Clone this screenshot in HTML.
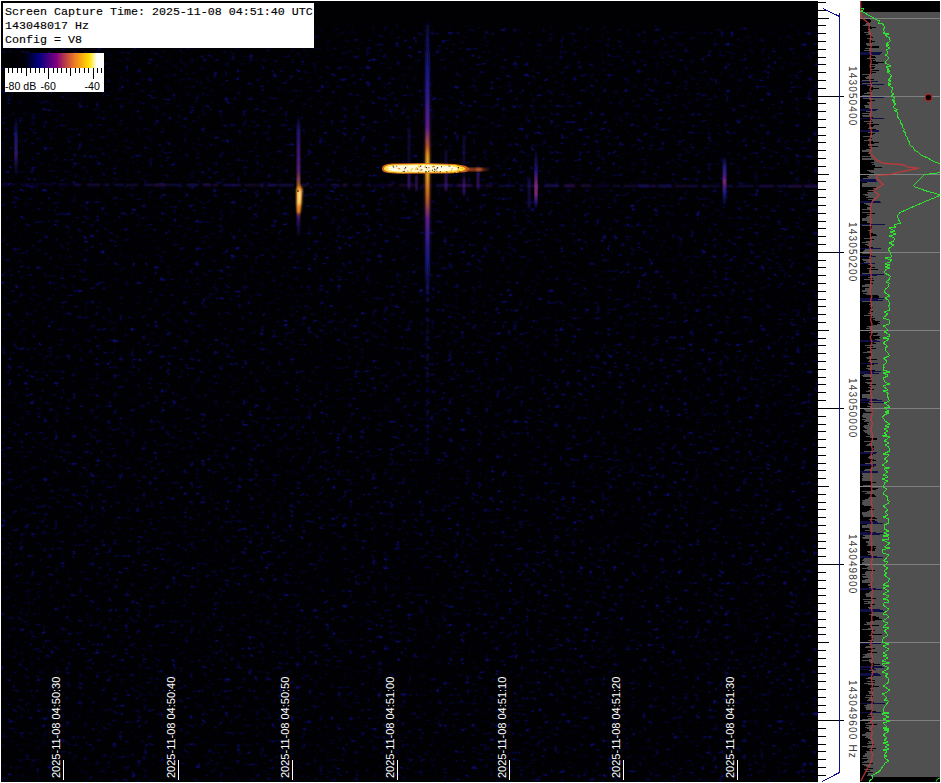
<!DOCTYPE html>
<html><head><meta charset="utf-8"><style>
html,body{margin:0;padding:0;}
body{width:941px;height:783px;background:#fff;position:relative;overflow:hidden;}
.a{position:absolute;}
#wf{left:1px;top:1px;width:817px;height:781px;background:#010104;overflow:hidden;}
#tb{left:2px;top:2px;width:311px;height:45px;background:#fff;font-family:"Liberation Mono",monospace;font-size:11.67px;color:#000;-webkit-text-stroke:0.15px #000;}
#tb div{position:absolute;left:2px;white-space:pre;line-height:12px;}
.ts{position:absolute;font-family:"Liberation Sans",sans-serif;font-size:11px;color:#fff;white-space:pre;transform-origin:0 0;transform:rotate(-90deg);line-height:11px;}
.hz{position:absolute;font-family:"Liberation Sans",sans-serif;font-size:10px;letter-spacing:1.16px;color:#3a3a3a;white-space:pre;transform-origin:0 0;transform:rotate(90deg);line-height:11px;}
#sp{left:860px;top:1px;width:80px;height:781px;background:#505050;overflow:hidden;}
</style></head><body>
<div id="wf" class="a"><svg class="a" style="left:0;top:0" width="817" height="781">
<defs>
<filter id="nz" x="0" y="0" width="100%" height="100%" color-interpolation-filters="sRGB">
<feTurbulence type="fractalNoise" baseFrequency="0.17 0.26" numOctaves="2" seed="3" result="t"/>
<feColorMatrix in="t" type="matrix" values="0 0 0 0 0  0 0 0 0 0  0 0 0 0 0  9 0 0 0 -6.4" result="m"/>
<feFlood flood-color="#0b0b60" result="f"/>
<feComposite in="f" in2="m" operator="in" result="c"/>
<feColorMatrix in="t" type="matrix" values="0 0 0 0 0  0 0 0 0 0  0 0 0 0 0  5 0 0 0 -2.9" result="m2"/>
<feFlood flood-color="#05053a" result="f2"/>
<feComposite in="f2" in2="m2" operator="in" result="c2"/>
<feMerge result="mm"><feMergeNode in="c2"/><feMergeNode in="c"/></feMerge>
<feTurbulence type="fractalNoise" baseFrequency="0.02 0.035" numOctaves="2" seed="11" result="lf"/>
<feColorMatrix in="lf" type="matrix" values="0 0 0 0 0  0 0 0 0 0  0 0 0 0 0  1.6 0 0 0 0.1" result="lfa"/>
<feComposite in="mm" in2="lfa" operator="in" result="mod"/>
<feGaussianBlur in="mod" stdDeviation="0.75"/>
</filter>
<filter id="bl1"><feGaussianBlur stdDeviation="0.8"/></filter>
<filter id="bl2"><feGaussianBlur stdDeviation="1.2"/></filter>
<linearGradient id="vg428" x1="0" y1="0" x2="0" y2="1">
<stop offset="0" stop-color="#2a1070" stop-opacity="0"/>
<stop offset="0.15" stop-color="#3a18a0"/>
<stop offset="0.35" stop-color="#7020a0"/>
<stop offset="0.48" stop-color="#f09020"/>
<stop offset="0.55" stop-color="#f0a030"/>
<stop offset="0.65" stop-color="#8020a0"/>
<stop offset="0.85" stop-color="#3a18a0"/>
<stop offset="1" stop-color="#2a1070" stop-opacity="0"/>
</linearGradient>
<linearGradient id="vg298" x1="0" y1="0" x2="0" y2="1">
<stop offset="0" stop-color="#2a1070" stop-opacity="0"/>
<stop offset="0.2" stop-color="#3018a0"/>
<stop offset="0.5" stop-color="#7a2aa0"/>
<stop offset="0.6" stop-color="#d06040"/>
<stop offset="0.8" stop-color="#3018a0"/>
<stop offset="1" stop-color="#2a1070" stop-opacity="0"/>
</linearGradient>
</defs>
<rect width="817" height="781" filter="url(#nz)"/>
<defs><linearGradient id="topfade" x1="0" y1="0" x2="0" y2="1"><stop offset="0" stop-color="#010104"/><stop offset="0.75" stop-color="#010104"/><stop offset="1" stop-color="#010104" stop-opacity="0"/></linearGradient></defs>
<rect x="0" y="0" width="817" height="30" fill="url(#topfade)"/>
<g transform="translate(-1,-1)"><g filter="url(#bl1)"><rect x="0" y="183.60" width="9" height="1.8" fill="#3018a0" opacity="0.48"/><rect x="11" y="183.62" width="5" height="1.8" fill="#3018a0" opacity="0.34"/><rect x="21" y="183.65" width="18" height="1.8" fill="#3018a0" opacity="0.40"/><rect x="44" y="183.70" width="10" height="1.8" fill="#3018a0" opacity="0.33"/><rect x="58" y="183.73" width="12" height="1.8" fill="#3018a0" opacity="0.33"/><rect x="74" y="183.76" width="7" height="1.8" fill="#3018a0" opacity="0.58"/><rect x="87" y="183.79" width="13" height="1.8" fill="#4a1aa0" opacity="0.48"/><rect x="105" y="183.83" width="4" height="1.8" fill="#2a1a98" opacity="0.69"/><rect x="114" y="183.85" width="10" height="1.8" fill="#2a1a98" opacity="0.54"/><rect x="126" y="183.88" width="12" height="1.8" fill="#4a1aa0" opacity="0.38"/><rect x="144" y="183.92" width="9" height="1.8" fill="#3018a0" opacity="0.55"/><rect x="154" y="183.94" width="13" height="1.8" fill="#5a20a0" opacity="0.58"/><rect x="168" y="183.97" width="14" height="1.8" fill="#2a1a98" opacity="0.49"/><rect x="187" y="184.01" width="11" height="1.8" fill="#2a1a98" opacity="0.72"/><rect x="203" y="184.05" width="8" height="1.8" fill="#4a1aa0" opacity="0.66"/><rect x="213" y="184.07" width="5" height="1.8" fill="#5a20a0" opacity="0.44"/><rect x="223" y="184.09" width="18" height="1.8" fill="#2a1a98" opacity="0.63"/><rect x="244" y="184.14" width="13" height="1.8" fill="#5a20a0" opacity="0.35"/><rect x="258" y="184.17" width="6" height="1.8" fill="#5a20a0" opacity="0.37"/><rect x="267" y="184.19" width="10" height="1.8" fill="#3018a0" opacity="0.73"/><rect x="278" y="184.21" width="16" height="1.8" fill="#2a1a98" opacity="0.56"/><rect x="299" y="184.26" width="9" height="1.8" fill="#5a20a0" opacity="0.46"/><rect x="314" y="184.29" width="13" height="1.8" fill="#3018a0" opacity="0.33"/><rect x="331" y="184.33" width="8" height="1.8" fill="#3018a0" opacity="0.61"/><rect x="343" y="184.35" width="4" height="1.8" fill="#5a20a0" opacity="0.62"/><rect x="353" y="184.38" width="8" height="1.8" fill="#2a1a98" opacity="0.47"/><rect x="367" y="184.41" width="4" height="1.8" fill="#3018a0" opacity="0.46"/><rect x="375" y="184.43" width="11" height="1.8" fill="#2a1a98" opacity="0.40"/><rect x="387" y="184.45" width="6" height="1.8" fill="#5a20a0" opacity="0.41"/><rect x="399" y="184.48" width="18" height="1.8" fill="#5a20a0" opacity="0.34"/><rect x="421" y="184.53" width="10" height="1.8" fill="#4a1aa0" opacity="0.43"/><rect x="436" y="184.56" width="17" height="1.8" fill="#2a1a98" opacity="0.69"/><rect x="457" y="184.61" width="15" height="1.8" fill="#5a20a0" opacity="0.74"/><rect x="476" y="184.65" width="7" height="1.8" fill="#4a1aa0" opacity="0.34"/><rect x="485" y="184.67" width="7" height="1.8" fill="#5a20a0" opacity="0.41"/><rect x="498" y="184.70" width="17" height="1.8" fill="#2a1a98" opacity="0.38"/><rect x="520" y="184.74" width="4" height="1.8" fill="#2a1a98" opacity="0.49"/><rect x="526" y="184.76" width="13" height="1.8" fill="#4a1aa0" opacity="0.44"/><rect x="544" y="184.80" width="15" height="1.8" fill="#3018a0" opacity="0.73"/><rect x="564" y="184.84" width="11" height="1.8" fill="#5a20a0" opacity="0.66"/><rect x="581" y="184.88" width="10" height="1.8" fill="#5a20a0" opacity="0.48"/><rect x="595" y="184.91" width="14" height="1.8" fill="#3018a0" opacity="0.33"/><rect x="613" y="184.95" width="7" height="1.8" fill="#2a1a98" opacity="0.37"/><rect x="624" y="184.97" width="13" height="1.8" fill="#4a1aa0" opacity="0.35"/><rect x="638" y="185.00" width="12" height="1.8" fill="#3018a0" opacity="0.73"/><rect x="651" y="185.03" width="5" height="1.8" fill="#4a1aa0" opacity="0.58"/><rect x="658" y="185.05" width="14" height="1.8" fill="#2a1a98" opacity="0.73"/><rect x="675" y="185.09" width="11" height="1.8" fill="#5a20a0" opacity="0.35"/><rect x="687" y="185.11" width="11" height="1.8" fill="#3018a0" opacity="0.52"/><rect x="702" y="185.14" width="6" height="1.8" fill="#2a1a98" opacity="0.64"/><rect x="709" y="185.16" width="11" height="1.8" fill="#3018a0" opacity="0.37"/><rect x="726" y="185.20" width="7" height="1.8" fill="#3018a0" opacity="0.46"/><rect x="738" y="185.22" width="16" height="1.8" fill="#3018a0" opacity="0.43"/><rect x="759" y="185.27" width="15" height="1.8" fill="#4a1aa0" opacity="0.53"/><rect x="777" y="185.31" width="9" height="1.8" fill="#2a1a98" opacity="0.54"/><rect x="788" y="185.33" width="14" height="1.8" fill="#4a1aa0" opacity="0.58"/><rect x="804" y="185.37" width="16" height="1.8" fill="#4a1aa0" opacity="0.67"/></g><defs><linearGradient id="v428" x1="0" y1="0" x2="0" y2="1">
<stop offset="0" stop-color="#101060" stop-opacity="0.3"/>
<stop offset="0.186" stop-color="#1c1c98"/>
<stop offset="0.285" stop-color="#3a20a0"/>
<stop offset="0.383" stop-color="#6a20a0"/>
<stop offset="0.455" stop-color="#d06030"/>
<stop offset="0.485" stop-color="#ffa020"/>
<stop offset="0.532" stop-color="#ffd040"/>
<stop offset="0.576" stop-color="#ffa020"/>
<stop offset="0.635" stop-color="#e07020"/>
<stop offset="0.72" stop-color="#6a20a0"/>
<stop offset="0.79" stop-color="#3a20a0"/>
<stop offset="0.87" stop-color="#1c1c90"/>
<stop offset="1" stop-color="#101060" stop-opacity="0.3"/>
</linearGradient>
<linearGradient id="v298" x1="0" y1="0" x2="0" y2="1">
<stop offset="0" stop-color="#101060" stop-opacity="0.3"/>
<stop offset="0.1" stop-color="#2a1a98"/>
<stop offset="0.45" stop-color="#7a2aa0"/>
<stop offset="0.57" stop-color="#e08030"/>
<stop offset="0.8" stop-color="#d06030"/>
<stop offset="0.84" stop-color="#5020a0"/>
<stop offset="1" stop-color="#101060" stop-opacity="0.3"/>
</linearGradient>
<linearGradient id="v536" x1="0" y1="0" x2="0" y2="1">
<stop offset="0" stop-color="#101060" stop-opacity="0.3"/>
<stop offset="0.35" stop-color="#2a1a98"/>
<stop offset="0.6" stop-color="#a03090"/>
<stop offset="0.76" stop-color="#a03090"/>
<stop offset="0.88" stop-color="#3a1aa0"/>
<stop offset="1" stop-color="#101060" stop-opacity="0.3"/>
</linearGradient>
<linearGradient id="v724" x1="0" y1="0" x2="0" y2="1">
<stop offset="0" stop-color="#101060" stop-opacity="0.3"/>
<stop offset="0.2" stop-color="#2020a0"/>
<stop offset="0.42" stop-color="#6020a0"/>
<stop offset="0.5" stop-color="#a03090"/>
<stop offset="0.62" stop-color="#6020a0"/>
<stop offset="0.75" stop-color="#2020a0"/>
<stop offset="1" stop-color="#101060" stop-opacity="0.3"/>
</linearGradient>
<linearGradient id="v16" x1="0" y1="0" x2="0" y2="1">
<stop offset="0" stop-color="#101060" stop-opacity="0.3"/>
<stop offset="0.3" stop-color="#2020a0"/>
<stop offset="0.65" stop-color="#5020a0"/>
<stop offset="1" stop-color="#101060" stop-opacity="0.3"/>
</linearGradient></defs><rect x="424.5" y="22" width="6" height="274" fill="url(#v428)" opacity="0.35" filter="url(#bl2)"/><g filter="url(#bl1)"><rect x="426" y="286" width="3" height="3" fill="#1818a0" opacity="0.46"/><rect x="426" y="292" width="3" height="2" fill="#1818a0" opacity="0.67"/><rect x="426" y="297" width="3" height="5" fill="#1818a0" opacity="0.31"/><rect x="426" y="308" width="3" height="4" fill="#1818a0" opacity="0.38"/><rect x="426" y="318" width="3" height="4" fill="#1818a0" opacity="0.57"/><rect x="426" y="325" width="3" height="2" fill="#1818a0" opacity="0.25"/><rect x="426" y="329" width="3" height="5" fill="#1818a0" opacity="0.23"/><rect x="426" y="336" width="3" height="5" fill="#1818a0" opacity="0.38"/><rect x="426" y="346" width="3" height="2" fill="#1818a0" opacity="0.31"/><rect x="426" y="354" width="3" height="4" fill="#1818a0" opacity="0.40"/><rect x="426" y="359" width="3" height="2" fill="#1818a0" opacity="0.42"/><rect x="426" y="367" width="3" height="3" fill="#1818a0" opacity="0.26"/><rect x="426" y="372" width="3" height="5" fill="#1818a0" opacity="0.34"/><rect x="426" y="380" width="3" height="2" fill="#1818a0" opacity="0.32"/><rect x="426" y="388" width="3" height="5" fill="#1818a0" opacity="0.21"/><rect x="426" y="399" width="3" height="2" fill="#1818a0" opacity="0.24"/><rect x="426" y="403" width="3" height="3" fill="#1818a0" opacity="0.09"/><rect x="426" y="411" width="3" height="5" fill="#1818a0" opacity="0.23"/><rect x="426" y="418" width="3" height="5" fill="#1818a0" opacity="0.18"/><rect x="426" y="426" width="3" height="3" fill="#1818a0" opacity="0.14"/><rect x="426" y="431" width="3" height="2" fill="#1818a0" opacity="0.06"/><rect x="426" y="439" width="3" height="2" fill="#1818a0" opacity="0.11"/><rect x="426" y="443" width="3" height="5" fill="#1818a0" opacity="0.15"/><rect x="426" y="450" width="3" height="3" fill="#1818a0" opacity="0.04"/><rect x="426" y="455" width="3" height="4" fill="#1818a0" opacity="0.07"/></g><rect x="426" y="22" width="3" height="274" fill="url(#v428)" filter="url(#bl1)"/><rect x="415.5" y="176" width="2" height="16" fill="#3a1aa0" opacity="0.4" filter="url(#bl1)"/><rect x="415.5" y="174" width="2" height="16" fill="#6a2098" opacity="0.45" filter="url(#bl1)"/><rect x="445" y="150" width="2" height="42" fill="#3a1aa0" opacity="0.4" filter="url(#bl1)"/><rect x="445" y="174" width="2" height="16" fill="#6a2098" opacity="0.45" filter="url(#bl1)"/><rect x="463" y="135" width="2" height="61" fill="#3a1aa0" opacity="0.4" filter="url(#bl1)"/><rect x="463" y="178" width="2" height="16" fill="#6a2098" opacity="0.45" filter="url(#bl1)"/><rect x="477" y="165" width="2" height="25" fill="#3a1aa0" opacity="0.4" filter="url(#bl1)"/><rect x="477" y="172" width="2" height="16" fill="#6a2098" opacity="0.45" filter="url(#bl1)"/><rect x="408" y="128" width="2" height="62" fill="#3a1aa0" opacity="0.4" filter="url(#bl1)"/><rect x="408" y="172" width="2" height="16" fill="#6a2098" opacity="0.45" filter="url(#bl1)"/><rect x="297" y="118" width="3" height="118" fill="url(#v298)" opacity="0.85" filter="url(#bl1)"/><polygon points="296.5,189 299.5,185 302.5,189 301.5,204 300,213 297.5,213 296.5,204" fill="#f09020" filter="url(#bl1)"/><polygon points="297.5,192 300,189 301,193 300.5,202 299,206 297.8,204" fill="#ffe890" filter="url(#bl1)"/><circle cx="298" cy="191" r="0.8" fill="#000"/><rect x="534.5" y="151" width="3" height="57" fill="url(#v536)" filter="url(#bl1)"/><rect x="528" y="178" width="2.5" height="30" fill="#2a1a98" opacity="0.5" filter="url(#bl1)"/><rect x="723" y="157" width="3" height="48" fill="url(#v724)" filter="url(#bl1)"/><rect x="14.5" y="118" width="3" height="57" fill="url(#v16)" opacity="0.8" filter="url(#bl1)"/><path d="M382,168.5 C382,165 386,164 392,163.5 L425,163 L455,164 L466,166 L470,169 L466,172 L450,173.5 L400,173.8 L388,173 C383,172 382,171 382,168.5 Z" fill="#e87018" opacity="0.9"/><path d="M384,168.5 C384,166 388,165 393,164.5 L425,164 L455,165 L463,167 L466,169 L462,171 L450,172.5 L400,172.8 L389,172 C385,171 384,170 384,168.5 Z" fill="#ffe040"/><path d="M387,168.5 C387,167 390,166 395,165.5 L425,165 L452,166 L458,168 L459,169 L455,170.5 L440,171.5 L400,171.8 L391,171 C388,170 387,169.5 387,168.5 Z" fill="#fffbe0"/><rect x="410.8" y="168.9" width="1.2" height="1.2" fill="#ffd040"/><rect x="390.6" y="170.4" width="1.2" height="1.2" fill="#ffe060"/><rect x="436.3" y="171.0" width="1.2" height="1.2" fill="#c07010"/><rect x="418.0" y="171.8" width="1.2" height="1.2" fill="#c07010"/><rect x="395.9" y="165.7" width="1.2" height="1.2" fill="#c07010"/><rect x="387.4" y="168.0" width="1.2" height="1.2" fill="#ffd040"/><rect x="432.3" y="170.7" width="1.2" height="1.2" fill="#ffd040"/><rect x="399.1" y="168.3" width="1.2" height="1.2" fill="#ffc020"/><rect x="428.3" y="167.1" width="1.2" height="1.2" fill="#c07010"/><rect x="426.3" y="168.4" width="1.2" height="1.2" fill="#ffc020"/><rect x="453.1" y="165.0" width="1.2" height="1.2" fill="#ffd040"/><rect x="407.0" y="170.7" width="1.2" height="1.2" fill="#c07010"/><rect x="420.4" y="164.7" width="1.2" height="1.2" fill="#ffc020"/><rect x="419.7" y="169.4" width="1.2" height="1.2" fill="#c07010"/><rect x="432.1" y="166.1" width="1.2" height="1.2" fill="#f0a000"/><rect x="420.4" y="168.8" width="1.2" height="1.2" fill="#ffe060"/><rect x="424.6" y="166.5" width="1.2" height="1.2" fill="#c07010"/><rect x="452.6" y="172.0" width="1.2" height="1.2" fill="#f0a000"/><rect x="456.1" y="171.6" width="1.2" height="1.2" fill="#ffd040"/><rect x="449.8" y="165.6" width="1.2" height="1.2" fill="#ffc020"/><rect x="415.8" y="167.0" width="1.2" height="1.2" fill="#ffd040"/><rect x="418.6" y="166.2" width="1.2" height="1.2" fill="#f0a000"/><rect x="445.6" y="171.7" width="1.2" height="1.2" fill="#ffd040"/><rect x="457.4" y="169.6" width="1.2" height="1.2" fill="#f0a000"/><rect x="396.9" y="171.6" width="1.2" height="1.2" fill="#ffe060"/><rect x="402.7" y="172.1" width="1.2" height="1.2" fill="#ffe060"/><rect x="453.3" y="165.8" width="1.2" height="1.2" fill="#ffd040"/><rect x="398.3" y="168.0" width="1.2" height="1.2" fill="#c07010"/><rect x="416.7" y="167.9" width="1.2" height="1.2" fill="#f0a000"/><rect x="410.2" y="170.3" width="1.2" height="1.2" fill="#ffc020"/><rect x="411.7" y="168.2" width="1.2" height="1.2" fill="#ffc020"/><rect x="415.2" y="168.6" width="1.2" height="1.2" fill="#f0a000"/><rect x="424.9" y="165.0" width="1.2" height="1.2" fill="#ffd040"/><rect x="459.8" y="165.3" width="1.2" height="1.2" fill="#f0a000"/><rect x="406.7" y="171.7" width="1.2" height="1.2" fill="#ffd040"/><rect x="406.6" y="165.5" width="1.2" height="1.2" fill="#ffe060"/><rect x="450.6" y="169.9" width="1.2" height="1.2" fill="#f0a000"/><rect x="416.9" y="168.8" width="1.2" height="1.2" fill="#c07010"/><rect x="429.4" y="170.1" width="1.2" height="1.2" fill="#ffc020"/><rect x="407.2" y="170.9" width="1.2" height="1.2" fill="#ffd040"/><rect x="418.3" y="165.1" width="1.2" height="1.2" fill="#ffc020"/><rect x="434.2" y="170.9" width="1.2" height="1.2" fill="#ffc020"/><rect x="432.2" y="166.3" width="1.2" height="1.2" fill="#f0a000"/><rect x="451.6" y="168.1" width="1.2" height="1.2" fill="#f0a000"/><rect x="461.6" y="167.8" width="1.2" height="1.2" fill="#f0a000"/><rect x="433.5" y="165.8" width="1" height="1" fill="#201000"/><rect x="439.7" y="171.1" width="1" height="1" fill="#201000"/><rect x="457.8" y="167.1" width="1" height="1" fill="#201000"/><rect x="402.7" y="171.1" width="1" height="1" fill="#201000"/><rect x="434.0" y="168.7" width="1" height="1" fill="#201000"/><rect x="404.4" y="168.2" width="1" height="1" fill="#201000"/><rect x="437.1" y="167.1" width="1" height="1" fill="#201000"/><rect x="446.3" y="171.5" width="1" height="1" fill="#201000"/><rect x="392.6" y="165.6" width="1" height="1" fill="#201000"/><rect x="425.4" y="171.4" width="1" height="1" fill="#201000"/><rect x="426.0" y="167.0" width="1" height="1" fill="#201000"/><rect x="421.3" y="169.4" width="1" height="1" fill="#201000"/><rect x="435.5" y="169.4" width="1" height="1" fill="#201000"/><rect x="428.2" y="170.8" width="1" height="1" fill="#201000"/><rect x="457.9" y="167.3" width="1" height="1" fill="#201000"/><rect x="405.1" y="166.9" width="1" height="1" fill="#201000"/><rect x="403.9" y="170.8" width="1" height="1" fill="#201000"/><rect x="441.0" y="166.3" width="1" height="1" fill="#201000"/><rect x="459.3" y="171.4" width="1" height="1" fill="#201000"/><rect x="448.6" y="165.6" width="1" height="1" fill="#201000"/><rect x="433.8" y="170.8" width="1" height="1" fill="#201000"/><rect x="420.2" y="165.8" width="1" height="1" fill="#201000"/><rect x="436.6" y="167.8" width="1" height="1" fill="#201000"/><rect x="425.4" y="171.3" width="1" height="1" fill="#201000"/><rect x="431.9" y="169.7" width="1" height="1" fill="#201000"/><rect x="393.2" y="166.6" width="1" height="1" fill="#201000"/><path d="M466,167.5 L480,168 L490,169.5 L480,171 L466,171.5 Z" fill="#c05020" opacity="0.8" filter="url(#bl1)"/><rect x="476" y="168" width="6" height="3" fill="#e07020" opacity="0.6" filter="url(#bl1)"/></g></svg><div id="tb" class="a">
<div style="top:3px">Screen Capture Time: 2025-11-08 04:51:40 UTC</div>
<div style="top:17px">143048017 Hz</div>
<div style="top:31px">Config = V8</div>
</div><svg class="a" style="left:4px;top:52px" width="99" height="39"><defs><linearGradient id="cbg" x1="0" y1="0" x2="1" y2="0">
<stop offset="0" stop-color="#000"/>
<stop offset="0.20" stop-color="#000008"/>
<stop offset="0.34" stop-color="#000080"/>
<stop offset="0.52" stop-color="#800080"/>
<stop offset="0.59" stop-color="#b03050"/>
<stop offset="0.71" stop-color="#f08020"/>
<stop offset="0.85" stop-color="#ffe000"/>
<stop offset="0.93" stop-color="#fff"/>
<stop offset="1" stop-color="#fff"/>
</linearGradient></defs><rect x="0" y="0" width="99" height="15" fill="url(#cbg)"/><rect x="0" y="15" width="99" height="24" fill="#fff"/><line x1="3.5" y1="15" x2="3.5" y2="20" stroke="#000" stroke-width="1"/><line x1="7.5" y1="15" x2="7.5" y2="20" stroke="#000" stroke-width="1"/><line x1="12.5" y1="15" x2="12.5" y2="20" stroke="#000" stroke-width="1"/><line x1="16.5" y1="15" x2="16.5" y2="20" stroke="#000" stroke-width="1"/><line x1="21.5" y1="15" x2="21.5" y2="23" stroke="#000" stroke-width="1"/><line x1="25.5" y1="15" x2="25.5" y2="20" stroke="#000" stroke-width="1"/><line x1="30.5" y1="15" x2="30.5" y2="20" stroke="#000" stroke-width="1"/><line x1="34.5" y1="15" x2="34.5" y2="20" stroke="#000" stroke-width="1"/><line x1="39.5" y1="15" x2="39.5" y2="20" stroke="#000" stroke-width="1"/><line x1="43.5" y1="15" x2="43.5" y2="26" stroke="#000" stroke-width="1"/><line x1="48.5" y1="15" x2="48.5" y2="20" stroke="#000" stroke-width="1"/><line x1="52.5" y1="15" x2="52.5" y2="20" stroke="#000" stroke-width="1"/><line x1="56.5" y1="15" x2="56.5" y2="20" stroke="#000" stroke-width="1"/><line x1="61.5" y1="15" x2="61.5" y2="20" stroke="#000" stroke-width="1"/><line x1="65.5" y1="15" x2="65.5" y2="23" stroke="#000" stroke-width="1"/><line x1="70.5" y1="15" x2="70.5" y2="20" stroke="#000" stroke-width="1"/><line x1="74.5" y1="15" x2="74.5" y2="20" stroke="#000" stroke-width="1"/><line x1="79.5" y1="15" x2="79.5" y2="20" stroke="#000" stroke-width="1"/><line x1="83.5" y1="15" x2="83.5" y2="20" stroke="#000" stroke-width="1"/><line x1="88.5" y1="15" x2="88.5" y2="26" stroke="#000" stroke-width="1"/><line x1="92.5" y1="15" x2="92.5" y2="20" stroke="#000" stroke-width="1"/><line x1="96.5" y1="15" x2="96.5" y2="20" stroke="#000" stroke-width="1"/><text x="0" y="37" font-family="Liberation Sans" font-size="10.6" fill="#000">-80 dB</text><text x="35.5" y="37" font-family="Liberation Sans" font-size="10.6" fill="#000">-60</text><text x="79.5" y="37" font-family="Liberation Sans" font-size="10.6" fill="#000">-40</text></svg><div class="ts" style="left:50px;top:777px">2025-11-08 04:50:30</div><div class="a" style="left:62px;top:759px;width:1px;height:20px;background:#fff"></div><div class="ts" style="left:165px;top:777px">2025-11-08 04:50:40</div><div class="a" style="left:177px;top:759px;width:1px;height:20px;background:#fff"></div><div class="ts" style="left:279px;top:777px">2025-11-08 04:50:50</div><div class="a" style="left:291px;top:759px;width:1px;height:20px;background:#fff"></div><div class="ts" style="left:384px;top:777px">2025-11-08 04:51:00</div><div class="a" style="left:396px;top:759px;width:1px;height:20px;background:#fff"></div><div class="ts" style="left:496px;top:777px">2025-11-08 04:51:10</div><div class="a" style="left:508px;top:759px;width:1px;height:20px;background:#fff"></div><div class="ts" style="left:610px;top:777px">2025-11-08 04:51:20</div><div class="a" style="left:622px;top:759px;width:1px;height:20px;background:#fff"></div><div class="ts" style="left:724px;top:777px">2025-11-08 04:51:30</div><div class="a" style="left:736px;top:759px;width:1px;height:20px;background:#fff"></div></div><svg class="a" style="left:818px;top:0" width="42" height="783"><rect x="0" y="2" width="8" height="1" fill="#000"/><rect x="0" y="10" width="8" height="1" fill="#000"/><rect x="0" y="18" width="11" height="1" fill="#000"/><rect x="0" y="25" width="8" height="1" fill="#000"/><rect x="0" y="33" width="8" height="1" fill="#000"/><rect x="0" y="41" width="8" height="1" fill="#000"/><rect x="0" y="49" width="8" height="1" fill="#000"/><rect x="0" y="57" width="8" height="1" fill="#000"/><rect x="0" y="64" width="8" height="1" fill="#000"/><rect x="0" y="72" width="8" height="1" fill="#000"/><rect x="0" y="80" width="8" height="1" fill="#000"/><rect x="0" y="88" width="8" height="1" fill="#000"/><rect x="0" y="96" width="26" height="1" fill="#000"/><rect x="0" y="103" width="8" height="1" fill="#000"/><rect x="0" y="111" width="8" height="1" fill="#000"/><rect x="0" y="119" width="8" height="1" fill="#000"/><rect x="0" y="127" width="8" height="1" fill="#000"/><rect x="0" y="135" width="8" height="1" fill="#000"/><rect x="0" y="142" width="8" height="1" fill="#000"/><rect x="0" y="150" width="8" height="1" fill="#000"/><rect x="0" y="158" width="8" height="1" fill="#000"/><rect x="0" y="166" width="8" height="1" fill="#000"/><rect x="0" y="174" width="11" height="1" fill="#000"/><rect x="0" y="181" width="8" height="1" fill="#000"/><rect x="0" y="189" width="8" height="1" fill="#000"/><rect x="0" y="197" width="8" height="1" fill="#000"/><rect x="0" y="205" width="8" height="1" fill="#000"/><rect x="0" y="213" width="8" height="1" fill="#000"/><rect x="0" y="221" width="8" height="1" fill="#000"/><rect x="0" y="228" width="8" height="1" fill="#000"/><rect x="0" y="236" width="8" height="1" fill="#000"/><rect x="0" y="244" width="8" height="1" fill="#000"/><rect x="0" y="252" width="26" height="1" fill="#000"/><rect x="0" y="260" width="8" height="1" fill="#000"/><rect x="0" y="267" width="8" height="1" fill="#000"/><rect x="0" y="275" width="8" height="1" fill="#000"/><rect x="0" y="283" width="8" height="1" fill="#000"/><rect x="0" y="291" width="8" height="1" fill="#000"/><rect x="0" y="299" width="8" height="1" fill="#000"/><rect x="0" y="306" width="8" height="1" fill="#000"/><rect x="0" y="314" width="8" height="1" fill="#000"/><rect x="0" y="322" width="8" height="1" fill="#000"/><rect x="0" y="330" width="11" height="1" fill="#000"/><rect x="0" y="338" width="8" height="1" fill="#000"/><rect x="0" y="345" width="8" height="1" fill="#000"/><rect x="0" y="353" width="8" height="1" fill="#000"/><rect x="0" y="361" width="8" height="1" fill="#000"/><rect x="0" y="369" width="8" height="1" fill="#000"/><rect x="0" y="377" width="8" height="1" fill="#000"/><rect x="0" y="384" width="8" height="1" fill="#000"/><rect x="0" y="392" width="8" height="1" fill="#000"/><rect x="0" y="400" width="8" height="1" fill="#000"/><rect x="0" y="408" width="26" height="1" fill="#000"/><rect x="0" y="416" width="8" height="1" fill="#000"/><rect x="0" y="424" width="8" height="1" fill="#000"/><rect x="0" y="431" width="8" height="1" fill="#000"/><rect x="0" y="439" width="8" height="1" fill="#000"/><rect x="0" y="447" width="8" height="1" fill="#000"/><rect x="0" y="455" width="8" height="1" fill="#000"/><rect x="0" y="463" width="8" height="1" fill="#000"/><rect x="0" y="470" width="8" height="1" fill="#000"/><rect x="0" y="478" width="8" height="1" fill="#000"/><rect x="0" y="486" width="11" height="1" fill="#000"/><rect x="0" y="494" width="8" height="1" fill="#000"/><rect x="0" y="502" width="8" height="1" fill="#000"/><rect x="0" y="509" width="8" height="1" fill="#000"/><rect x="0" y="517" width="8" height="1" fill="#000"/><rect x="0" y="525" width="8" height="1" fill="#000"/><rect x="0" y="533" width="8" height="1" fill="#000"/><rect x="0" y="541" width="8" height="1" fill="#000"/><rect x="0" y="548" width="8" height="1" fill="#000"/><rect x="0" y="556" width="8" height="1" fill="#000"/><rect x="0" y="564" width="26" height="1" fill="#000"/><rect x="0" y="572" width="8" height="1" fill="#000"/><rect x="0" y="580" width="8" height="1" fill="#000"/><rect x="0" y="588" width="8" height="1" fill="#000"/><rect x="0" y="595" width="8" height="1" fill="#000"/><rect x="0" y="603" width="8" height="1" fill="#000"/><rect x="0" y="611" width="8" height="1" fill="#000"/><rect x="0" y="619" width="8" height="1" fill="#000"/><rect x="0" y="627" width="8" height="1" fill="#000"/><rect x="0" y="634" width="8" height="1" fill="#000"/><rect x="0" y="642" width="11" height="1" fill="#000"/><rect x="0" y="650" width="8" height="1" fill="#000"/><rect x="0" y="658" width="8" height="1" fill="#000"/><rect x="0" y="666" width="8" height="1" fill="#000"/><rect x="0" y="673" width="8" height="1" fill="#000"/><rect x="0" y="681" width="8" height="1" fill="#000"/><rect x="0" y="689" width="8" height="1" fill="#000"/><rect x="0" y="697" width="8" height="1" fill="#000"/><rect x="0" y="705" width="8" height="1" fill="#000"/><rect x="0" y="712" width="8" height="1" fill="#000"/><rect x="0" y="720" width="26" height="1" fill="#000"/><rect x="0" y="728" width="8" height="1" fill="#000"/><rect x="0" y="736" width="8" height="1" fill="#000"/><rect x="0" y="744" width="8" height="1" fill="#000"/><rect x="0" y="751" width="8" height="1" fill="#000"/><rect x="0" y="759" width="8" height="1" fill="#000"/><rect x="0" y="767" width="8" height="1" fill="#000"/><rect x="0" y="775" width="8" height="1" fill="#000"/><polyline points="5,8.5 21.5,16.5" stroke="#101090" stroke-width="1" fill="none" shape-rendering="crispEdges"/><rect x="21" y="13" width="1" height="760" fill="#101090"/><polyline points="21.5,772.5 4,781.5" stroke="#101090" stroke-width="1" fill="none" shape-rendering="crispEdges"/></svg><div class="hz" style="left:858px;top:66.3px">143050400</div><div class="hz" style="left:858px;top:222.3px">143050200</div><div class="hz" style="left:858px;top:378.3px">143050000</div><div class="hz" style="left:858px;top:534.3px">143049800</div><div class="hz" style="left:858px;top:680.2px">143049600 Hz</div><svg class="a" style="left:860px;top:0" width="80" height="783"><rect x="0" y="1" width="80" height="781" fill="#505050"/><rect x="0" y="1" width="80" height="11" fill="#000"/><rect x="0" y="777" width="80" height="5" fill="#000"/><rect x="0" y="19" width="10" height="1" fill="#000"/><rect x="0" y="20" width="11" height="1" fill="#000"/><rect x="0" y="21" width="11" height="1" fill="#000"/><rect x="0" y="22" width="10" height="1" fill="#000"/><rect x="0" y="23" width="6" height="1" fill="#000"/><rect x="0" y="24" width="5" height="1" fill="#000"/><rect x="0" y="25" width="3" height="1" fill="#000"/><rect x="0" y="26" width="11" height="1" fill="#000"/><rect x="0" y="27" width="16" height="1" fill="#000"/><rect x="0" y="28" width="12" height="1" fill="#000"/><rect x="0" y="29" width="8" height="1" fill="#000"/><rect x="0" y="30" width="9" height="1" fill="#000"/><rect x="0" y="31" width="8" height="1" fill="#000"/><rect x="0" y="32" width="4" height="1" fill="#000"/><rect x="0" y="33" width="8" height="1" fill="#000"/><rect x="0" y="34" width="6" height="1" fill="#000"/><rect x="0" y="35" width="11" height="1" fill="#000"/><rect x="0" y="36" width="12" height="1" fill="#000"/><rect x="0" y="37" width="13" height="1" fill="#000"/><rect x="0" y="38" width="7" height="1" fill="#000"/><rect x="0" y="39" width="10" height="1" fill="#000"/><rect x="0" y="40" width="12" height="1" fill="#000"/><rect x="0" y="41" width="15" height="1" fill="#000"/><rect x="0" y="42" width="12" height="1" fill="#000"/><rect x="0" y="43" width="6" height="1" fill="#000"/><rect x="0" y="44" width="6" height="1" fill="#000"/><rect x="0" y="45" width="7" height="1" fill="#000"/><rect x="0" y="46" width="19" height="1" fill="#000"/><rect x="0" y="47" width="19" height="1" fill="#000"/><rect x="0" y="48" width="5" height="1" fill="#000"/><rect x="0" y="49" width="9" height="1" fill="#000"/><rect x="0" y="50" width="4" height="1" fill="#000"/><rect x="0" y="51" width="11" height="1" fill="#000"/><rect x="0" y="52" width="22" height="1" fill="#0e0e48"/><rect x="0" y="53" width="21" height="1" fill="#0e0e48"/><rect x="0" y="54" width="20" height="1" fill="#0e0e48"/><rect x="0" y="55" width="12" height="1" fill="#000"/><rect x="0" y="56" width="15" height="1" fill="#000"/><rect x="0" y="57" width="16" height="1" fill="#000"/><rect x="0" y="58" width="7" height="1" fill="#000"/><rect x="0" y="59" width="15" height="1" fill="#000"/><rect x="0" y="60" width="13" height="1" fill="#000"/><rect x="0" y="61" width="16" height="1" fill="#000"/><rect x="0" y="62" width="24" height="1" fill="#000"/><rect x="0" y="63" width="18" height="1" fill="#000"/><rect x="0" y="64" width="10" height="1" fill="#000"/><rect x="0" y="65" width="15" height="1" fill="#000"/><rect x="0" y="66" width="10" height="1" fill="#000"/><rect x="0" y="67" width="15" height="1" fill="#000"/><rect x="0" y="68" width="14" height="1" fill="#000"/><rect x="0" y="69" width="11" height="1" fill="#000"/><rect x="0" y="70" width="19" height="1" fill="#000"/><rect x="0" y="71" width="12" height="1" fill="#000"/><rect x="0" y="72" width="16" height="1" fill="#000"/><rect x="0" y="73" width="12" height="1" fill="#000"/><rect x="0" y="74" width="2" height="1" fill="#000"/><rect x="0" y="75" width="9" height="1" fill="#000"/><rect x="0" y="76" width="7" height="1" fill="#000"/><rect x="0" y="77" width="5" height="1" fill="#000"/><rect x="0" y="78" width="6" height="1" fill="#000"/><rect x="0" y="79" width="14" height="1" fill="#000"/><rect x="0" y="80" width="2" height="1" fill="#000"/><rect x="0" y="81" width="18" height="1" fill="#0e0e48"/><rect x="0" y="82" width="12" height="1" fill="#000"/><rect x="0" y="83" width="2" height="1" fill="#000"/><rect x="0" y="84" width="24" height="1" fill="#0e0e48"/><rect x="0" y="85" width="7" height="1" fill="#000"/><rect x="0" y="86" width="11" height="1" fill="#000"/><rect x="0" y="87" width="13" height="1" fill="#000"/><rect x="0" y="88" width="19" height="1" fill="#000"/><rect x="0" y="89" width="13" height="1" fill="#000"/><rect x="0" y="90" width="11" height="1" fill="#000"/><rect x="0" y="91" width="12" height="1" fill="#000"/><rect x="0" y="92" width="7" height="1" fill="#000"/><rect x="0" y="93" width="4" height="1" fill="#000"/><rect x="0" y="94" width="11" height="1" fill="#000"/><rect x="0" y="95" width="2" height="1" fill="#000"/><rect x="0" y="96" width="17" height="1" fill="#0e0e48"/><rect x="0" y="97" width="24" height="1" fill="#0e0e48"/><rect x="0" y="98" width="3" height="1" fill="#000"/><rect x="0" y="99" width="9" height="1" fill="#000"/><rect x="0" y="100" width="15" height="1" fill="#000"/><rect x="0" y="101" width="11" height="1" fill="#000"/><rect x="0" y="102" width="7" height="1" fill="#000"/><rect x="0" y="103" width="8" height="1" fill="#000"/><rect x="0" y="104" width="9" height="1" fill="#000"/><rect x="0" y="105" width="4" height="1" fill="#000"/><rect x="0" y="106" width="5" height="1" fill="#000"/><rect x="0" y="107" width="5" height="1" fill="#000"/><rect x="0" y="108" width="9" height="1" fill="#000"/><rect x="0" y="109" width="18" height="1" fill="#0e0e48"/><rect x="0" y="110" width="16" height="1" fill="#0e0e48"/><rect x="0" y="111" width="6" height="1" fill="#000"/><rect x="0" y="112" width="10" height="1" fill="#000"/><rect x="0" y="113" width="2" height="1" fill="#000"/><rect x="0" y="114" width="9" height="1" fill="#000"/><rect x="0" y="115" width="2" height="1" fill="#000"/><rect x="0" y="116" width="3" height="1" fill="#000"/><rect x="0" y="117" width="13" height="1" fill="#000"/><rect x="0" y="118" width="24" height="1" fill="#0e0e48"/><rect x="0" y="119" width="11" height="1" fill="#000"/><rect x="0" y="120" width="12" height="1" fill="#000"/><rect x="0" y="121" width="4" height="1" fill="#000"/><rect x="0" y="122" width="13" height="1" fill="#000"/><rect x="0" y="123" width="7" height="1" fill="#000"/><rect x="0" y="124" width="19" height="1" fill="#000"/><rect x="0" y="125" width="14" height="1" fill="#000"/><rect x="0" y="126" width="13" height="1" fill="#000"/><rect x="0" y="127" width="9" height="1" fill="#000"/><rect x="0" y="128" width="8" height="1" fill="#000"/><rect x="0" y="129" width="16" height="1" fill="#000"/><rect x="0" y="130" width="19" height="1" fill="#0e0e48"/><rect x="0" y="131" width="19" height="1" fill="#0e0e48"/><rect x="0" y="132" width="8" height="1" fill="#000"/><rect x="0" y="133" width="15" height="1" fill="#000"/><rect x="0" y="134" width="13" height="1" fill="#000"/><rect x="0" y="135" width="10" height="1" fill="#000"/><rect x="0" y="136" width="3" height="1" fill="#000"/><rect x="0" y="137" width="11" height="1" fill="#000"/><rect x="0" y="138" width="12" height="1" fill="#000"/><rect x="0" y="139" width="8" height="1" fill="#000"/><rect x="0" y="140" width="4" height="1" fill="#000"/><rect x="0" y="141" width="13" height="1" fill="#000"/><rect x="0" y="142" width="19" height="1" fill="#000"/><rect x="0" y="143" width="14" height="1" fill="#000"/><rect x="0" y="144" width="8" height="1" fill="#000"/><rect x="0" y="145" width="8" height="1" fill="#000"/><rect x="0" y="146" width="18" height="1" fill="#000"/><rect x="0" y="147" width="9" height="1" fill="#000"/><rect x="0" y="148" width="11" height="1" fill="#000"/><rect x="0" y="149" width="6" height="1" fill="#000"/><rect x="0" y="150" width="2" height="1" fill="#000"/><rect x="0" y="151" width="2" height="1" fill="#000"/><rect x="0" y="152" width="9" height="1" fill="#000"/><rect x="0" y="153" width="8" height="1" fill="#000"/><rect x="0" y="154" width="11" height="1" fill="#000"/><rect x="0" y="155" width="10" height="1" fill="#000"/><rect x="0" y="156" width="2" height="1" fill="#000"/><rect x="0" y="157" width="11" height="1" fill="#000"/><rect x="0" y="158" width="2" height="1" fill="#000"/><rect x="0" y="159" width="2" height="1" fill="#000"/><rect x="0" y="160" width="14" height="1" fill="#000"/><rect x="0" y="161" width="14" height="1" fill="#000"/><rect x="0" y="162" width="11" height="1" fill="#000"/><rect x="0" y="163" width="14" height="1" fill="#000"/><rect x="0" y="164" width="12" height="1" fill="#000"/><rect x="0" y="165" width="15" height="1" fill="#000"/><rect x="0" y="166" width="15" height="1" fill="#000"/><rect x="0" y="167" width="22" height="1" fill="#000"/><rect x="0" y="168" width="14" height="1" fill="#000"/><rect x="0" y="169" width="14" height="1" fill="#000"/><rect x="0" y="170" width="7" height="1" fill="#000"/><rect x="0" y="171" width="9" height="1" fill="#000"/><rect x="0" y="172" width="11" height="1" fill="#000"/><rect x="0" y="173" width="14" height="1" fill="#000"/><rect x="0" y="174" width="9" height="1" fill="#000"/><rect x="0" y="175" width="9" height="1" fill="#000"/><rect x="0" y="176" width="7" height="1" fill="#000"/><rect x="0" y="177" width="8" height="1" fill="#000"/><rect x="0" y="178" width="3" height="1" fill="#000"/><rect x="0" y="179" width="16" height="1" fill="#0e0e48"/><rect x="0" y="180" width="16" height="1" fill="#0e0e48"/><rect x="0" y="181" width="17" height="1" fill="#0e0e48"/><rect x="0" y="182" width="7" height="1" fill="#000"/><rect x="0" y="183" width="2" height="1" fill="#000"/><rect x="0" y="184" width="2" height="1" fill="#000"/><rect x="0" y="185" width="2" height="1" fill="#000"/><rect x="0" y="186" width="2" height="1" fill="#000"/><rect x="0" y="187" width="16" height="1" fill="#000"/><rect x="0" y="188" width="13" height="1" fill="#000"/><rect x="0" y="189" width="14" height="1" fill="#000"/><rect x="0" y="190" width="8" height="1" fill="#000"/><rect x="0" y="191" width="15" height="1" fill="#000"/><rect x="0" y="192" width="7" height="1" fill="#000"/><rect x="0" y="193" width="8" height="1" fill="#000"/><rect x="0" y="194" width="3" height="1" fill="#000"/><rect x="0" y="195" width="5" height="1" fill="#000"/><rect x="0" y="196" width="8" height="1" fill="#000"/><rect x="0" y="197" width="6" height="1" fill="#000"/><rect x="0" y="198" width="13" height="1" fill="#000"/><rect x="0" y="199" width="8" height="1" fill="#000"/><rect x="0" y="200" width="12" height="1" fill="#000"/><rect x="0" y="201" width="20" height="1" fill="#0e0e48"/><rect x="0" y="202" width="21" height="1" fill="#0e0e48"/><rect x="0" y="203" width="4" height="1" fill="#000"/><rect x="0" y="204" width="6" height="1" fill="#000"/><rect x="0" y="205" width="8" height="1" fill="#000"/><rect x="0" y="206" width="11" height="1" fill="#000"/><rect x="0" y="207" width="7" height="1" fill="#000"/><rect x="0" y="208" width="7" height="1" fill="#000"/><rect x="0" y="209" width="2" height="1" fill="#000"/><rect x="0" y="210" width="10" height="1" fill="#000"/><rect x="0" y="211" width="11" height="1" fill="#000"/><rect x="0" y="212" width="2" height="1" fill="#000"/><rect x="0" y="213" width="15" height="1" fill="#000"/><rect x="0" y="214" width="7" height="1" fill="#000"/><rect x="0" y="215" width="10" height="1" fill="#000"/><rect x="0" y="216" width="7" height="1" fill="#000"/><rect x="0" y="217" width="6" height="1" fill="#000"/><rect x="0" y="218" width="2" height="1" fill="#000"/><rect x="0" y="219" width="2" height="1" fill="#000"/><rect x="0" y="220" width="2" height="1" fill="#000"/><rect x="0" y="221" width="7" height="1" fill="#000"/><rect x="0" y="222" width="7" height="1" fill="#000"/><rect x="0" y="223" width="10" height="1" fill="#000"/><rect x="0" y="224" width="25" height="1" fill="#0e0e48"/><rect x="0" y="225" width="2" height="1" fill="#000"/><rect x="0" y="226" width="12" height="1" fill="#000"/><rect x="0" y="227" width="12" height="1" fill="#000"/><rect x="0" y="228" width="12" height="1" fill="#000"/><rect x="0" y="229" width="11" height="1" fill="#000"/><rect x="0" y="230" width="8" height="1" fill="#000"/><rect x="0" y="231" width="10" height="1" fill="#000"/><rect x="0" y="232" width="10" height="1" fill="#000"/><rect x="0" y="233" width="13" height="1" fill="#000"/><rect x="0" y="234" width="16" height="1" fill="#000"/><rect x="0" y="235" width="17" height="1" fill="#000"/><rect x="0" y="236" width="12" height="1" fill="#000"/><rect x="0" y="237" width="10" height="1" fill="#000"/><rect x="0" y="238" width="4" height="1" fill="#000"/><rect x="0" y="239" width="14" height="1" fill="#000"/><rect x="0" y="240" width="10" height="1" fill="#000"/><rect x="0" y="241" width="6" height="1" fill="#000"/><rect x="0" y="242" width="2" height="1" fill="#000"/><rect x="0" y="243" width="8" height="1" fill="#000"/><rect x="0" y="244" width="5" height="1" fill="#000"/><rect x="0" y="245" width="7" height="1" fill="#000"/><rect x="0" y="246" width="9" height="1" fill="#000"/><rect x="0" y="247" width="13" height="1" fill="#000"/><rect x="0" y="248" width="21" height="1" fill="#0e0e48"/><rect x="0" y="249" width="5" height="1" fill="#000"/><rect x="0" y="250" width="4" height="1" fill="#000"/><rect x="0" y="251" width="3" height="1" fill="#000"/><rect x="0" y="252" width="7" height="1" fill="#000"/><rect x="0" y="253" width="2" height="1" fill="#000"/><rect x="0" y="254" width="10" height="1" fill="#000"/><rect x="0" y="255" width="12" height="1" fill="#000"/><rect x="0" y="256" width="16" height="1" fill="#0e0e48"/><rect x="0" y="257" width="9" height="1" fill="#000"/><rect x="0" y="258" width="11" height="1" fill="#000"/><rect x="0" y="259" width="2" height="1" fill="#000"/><rect x="0" y="260" width="3" height="1" fill="#000"/><rect x="0" y="261" width="6" height="1" fill="#000"/><rect x="0" y="262" width="4" height="1" fill="#000"/><rect x="0" y="263" width="15" height="1" fill="#0e0e48"/><rect x="0" y="264" width="8" height="1" fill="#000"/><rect x="0" y="265" width="10" height="1" fill="#000"/><rect x="0" y="266" width="12" height="1" fill="#000"/><rect x="0" y="267" width="15" height="1" fill="#000"/><rect x="0" y="268" width="7" height="1" fill="#000"/><rect x="0" y="269" width="18" height="1" fill="#000"/><rect x="0" y="270" width="9" height="1" fill="#000"/><rect x="0" y="271" width="9" height="1" fill="#000"/><rect x="0" y="272" width="9" height="1" fill="#000"/><rect x="0" y="273" width="2" height="1" fill="#000"/><rect x="0" y="274" width="24" height="1" fill="#0e0e48"/><rect x="0" y="275" width="17" height="1" fill="#0e0e48"/><rect x="0" y="276" width="10" height="1" fill="#000"/><rect x="0" y="277" width="8" height="1" fill="#000"/><rect x="0" y="278" width="13" height="1" fill="#000"/><rect x="0" y="279" width="4" height="1" fill="#000"/><rect x="0" y="280" width="14" height="1" fill="#000"/><rect x="0" y="281" width="11" height="1" fill="#000"/><rect x="0" y="282" width="10" height="1" fill="#000"/><rect x="0" y="283" width="13" height="1" fill="#000"/><rect x="0" y="284" width="5" height="1" fill="#000"/><rect x="0" y="285" width="2" height="1" fill="#000"/><rect x="0" y="286" width="2" height="1" fill="#000"/><rect x="0" y="287" width="9" height="1" fill="#000"/><rect x="0" y="288" width="5" height="1" fill="#000"/><rect x="0" y="289" width="5" height="1" fill="#000"/><rect x="0" y="290" width="2" height="1" fill="#000"/><rect x="0" y="291" width="2" height="1" fill="#000"/><rect x="0" y="292" width="7" height="1" fill="#000"/><rect x="0" y="293" width="3" height="1" fill="#000"/><rect x="0" y="294" width="6" height="1" fill="#000"/><rect x="0" y="295" width="18" height="1" fill="#000"/><rect x="0" y="296" width="19" height="1" fill="#000"/><rect x="0" y="297" width="19" height="1" fill="#000"/><rect x="0" y="298" width="24" height="1" fill="#0e0e48"/><rect x="0" y="299" width="18" height="1" fill="#0e0e48"/><rect x="0" y="300" width="23" height="1" fill="#0e0e48"/><rect x="0" y="301" width="2" height="1" fill="#000"/><rect x="0" y="302" width="11" height="1" fill="#000"/><rect x="0" y="303" width="11" height="1" fill="#000"/><rect x="0" y="304" width="9" height="1" fill="#000"/><rect x="0" y="305" width="11" height="1" fill="#000"/><rect x="0" y="306" width="10" height="1" fill="#000"/><rect x="0" y="307" width="13" height="1" fill="#000"/><rect x="0" y="308" width="12" height="1" fill="#000"/><rect x="0" y="309" width="10" height="1" fill="#000"/><rect x="0" y="310" width="11" height="1" fill="#000"/><rect x="0" y="311" width="13" height="1" fill="#000"/><rect x="0" y="312" width="11" height="1" fill="#000"/><rect x="0" y="313" width="8" height="1" fill="#000"/><rect x="0" y="314" width="12" height="1" fill="#000"/><rect x="0" y="315" width="4" height="1" fill="#000"/><rect x="0" y="316" width="13" height="1" fill="#000"/><rect x="0" y="317" width="12" height="1" fill="#000"/><rect x="0" y="318" width="15" height="1" fill="#000"/><rect x="0" y="319" width="13" height="1" fill="#000"/><rect x="0" y="320" width="15" height="1" fill="#000"/><rect x="0" y="321" width="20" height="1" fill="#000"/><rect x="0" y="322" width="18" height="1" fill="#000"/><rect x="0" y="323" width="20" height="1" fill="#000"/><rect x="0" y="324" width="17" height="1" fill="#000"/><rect x="0" y="325" width="13" height="1" fill="#000"/><rect x="0" y="326" width="7" height="1" fill="#000"/><rect x="0" y="327" width="9" height="1" fill="#000"/><rect x="0" y="328" width="6" height="1" fill="#000"/><rect x="0" y="329" width="10" height="1" fill="#000"/><rect x="0" y="330" width="12" height="1" fill="#000"/><rect x="0" y="331" width="12" height="1" fill="#000"/><rect x="0" y="332" width="9" height="1" fill="#000"/><rect x="0" y="333" width="18" height="1" fill="#000"/><rect x="0" y="334" width="17" height="1" fill="#000"/><rect x="0" y="335" width="13" height="1" fill="#000"/><rect x="0" y="336" width="20" height="1" fill="#000"/><rect x="0" y="337" width="19" height="1" fill="#000"/><rect x="0" y="338" width="20" height="1" fill="#000"/><rect x="0" y="339" width="15" height="1" fill="#000"/><rect x="0" y="340" width="17" height="1" fill="#0e0e48"/><rect x="0" y="341" width="20" height="1" fill="#0e0e48"/><rect x="0" y="342" width="14" height="1" fill="#000"/><rect x="0" y="343" width="16" height="1" fill="#000"/><rect x="0" y="344" width="12" height="1" fill="#000"/><rect x="0" y="345" width="5" height="1" fill="#000"/><rect x="0" y="346" width="13" height="1" fill="#000"/><rect x="0" y="347" width="7" height="1" fill="#000"/><rect x="0" y="348" width="16" height="1" fill="#000"/><rect x="0" y="349" width="11" height="1" fill="#000"/><rect x="0" y="350" width="12" height="1" fill="#000"/><rect x="0" y="351" width="7" height="1" fill="#000"/><rect x="0" y="352" width="3" height="1" fill="#000"/><rect x="0" y="353" width="12" height="1" fill="#000"/><rect x="0" y="354" width="11" height="1" fill="#000"/><rect x="0" y="355" width="12" height="1" fill="#000"/><rect x="0" y="356" width="9" height="1" fill="#000"/><rect x="0" y="357" width="6" height="1" fill="#000"/><rect x="0" y="358" width="7" height="1" fill="#000"/><rect x="0" y="359" width="17" height="1" fill="#000"/><rect x="0" y="360" width="9" height="1" fill="#000"/><rect x="0" y="361" width="8" height="1" fill="#000"/><rect x="0" y="362" width="10" height="1" fill="#000"/><rect x="0" y="363" width="18" height="1" fill="#0e0e48"/><rect x="0" y="364" width="14" height="1" fill="#000"/><rect x="0" y="365" width="7" height="1" fill="#000"/><rect x="0" y="366" width="7" height="1" fill="#000"/><rect x="0" y="367" width="10" height="1" fill="#000"/><rect x="0" y="368" width="6" height="1" fill="#000"/><rect x="0" y="369" width="8" height="1" fill="#000"/><rect x="0" y="370" width="15" height="1" fill="#000"/><rect x="0" y="371" width="21" height="1" fill="#0e0e48"/><rect x="0" y="372" width="14" height="1" fill="#0e0e48"/><rect x="0" y="373" width="19" height="1" fill="#0e0e48"/><rect x="0" y="374" width="4" height="1" fill="#000"/><rect x="0" y="375" width="2" height="1" fill="#000"/><rect x="0" y="376" width="3" height="1" fill="#000"/><rect x="0" y="377" width="12" height="1" fill="#000"/><rect x="0" y="378" width="11" height="1" fill="#000"/><rect x="0" y="379" width="6" height="1" fill="#000"/><rect x="0" y="380" width="13" height="1" fill="#000"/><rect x="0" y="381" width="12" height="1" fill="#000"/><rect x="0" y="382" width="5" height="1" fill="#000"/><rect x="0" y="383" width="7" height="1" fill="#000"/><rect x="0" y="384" width="16" height="1" fill="#000"/><rect x="0" y="385" width="9" height="1" fill="#000"/><rect x="0" y="386" width="12" height="1" fill="#000"/><rect x="0" y="387" width="8" height="1" fill="#000"/><rect x="0" y="388" width="10" height="1" fill="#000"/><rect x="0" y="389" width="14" height="1" fill="#000"/><rect x="0" y="390" width="8" height="1" fill="#000"/><rect x="0" y="391" width="6" height="1" fill="#000"/><rect x="0" y="392" width="11" height="1" fill="#000"/><rect x="0" y="393" width="10" height="1" fill="#000"/><rect x="0" y="394" width="2" height="1" fill="#000"/><rect x="0" y="395" width="2" height="1" fill="#000"/><rect x="0" y="396" width="2" height="1" fill="#000"/><rect x="0" y="397" width="2" height="1" fill="#000"/><rect x="0" y="398" width="7" height="1" fill="#000"/><rect x="0" y="399" width="17" height="1" fill="#0e0e48"/><rect x="0" y="400" width="22" height="1" fill="#0e0e48"/><rect x="0" y="401" width="9" height="1" fill="#000"/><rect x="0" y="402" width="24" height="1" fill="#0e0e48"/><rect x="0" y="403" width="8" height="1" fill="#000"/><rect x="0" y="404" width="9" height="1" fill="#000"/><rect x="0" y="405" width="11" height="1" fill="#000"/><rect x="0" y="406" width="7" height="1" fill="#000"/><rect x="0" y="407" width="10" height="1" fill="#000"/><rect x="0" y="408" width="6" height="1" fill="#000"/><rect x="0" y="409" width="4" height="1" fill="#000"/><rect x="0" y="410" width="5" height="1" fill="#000"/><rect x="0" y="411" width="6" height="1" fill="#000"/><rect x="0" y="412" width="13" height="1" fill="#000"/><rect x="0" y="413" width="3" height="1" fill="#000"/><rect x="0" y="414" width="3" height="1" fill="#000"/><rect x="0" y="415" width="2" height="1" fill="#000"/><rect x="0" y="416" width="2" height="1" fill="#000"/><rect x="0" y="417" width="3" height="1" fill="#000"/><rect x="0" y="418" width="6" height="1" fill="#000"/><rect x="0" y="419" width="2" height="1" fill="#000"/><rect x="0" y="420" width="5" height="1" fill="#000"/><rect x="0" y="421" width="4" height="1" fill="#000"/><rect x="0" y="422" width="9" height="1" fill="#000"/><rect x="0" y="423" width="7" height="1" fill="#000"/><rect x="0" y="424" width="8" height="1" fill="#000"/><rect x="0" y="425" width="4" height="1" fill="#000"/><rect x="0" y="426" width="3" height="1" fill="#000"/><rect x="0" y="427" width="4" height="1" fill="#000"/><rect x="0" y="428" width="5" height="1" fill="#000"/><rect x="0" y="429" width="7" height="1" fill="#000"/><rect x="0" y="430" width="3" height="1" fill="#000"/><rect x="0" y="431" width="4" height="1" fill="#000"/><rect x="0" y="432" width="5" height="1" fill="#000"/><rect x="0" y="433" width="7" height="1" fill="#000"/><rect x="0" y="434" width="8" height="1" fill="#000"/><rect x="0" y="435" width="10" height="1" fill="#000"/><rect x="0" y="436" width="6" height="1" fill="#000"/><rect x="0" y="437" width="10" height="1" fill="#000"/><rect x="0" y="438" width="17" height="1" fill="#000"/><rect x="0" y="439" width="17" height="1" fill="#000"/><rect x="0" y="440" width="11" height="1" fill="#000"/><rect x="0" y="441" width="4" height="1" fill="#000"/><rect x="0" y="442" width="12" height="1" fill="#000"/><rect x="0" y="443" width="9" height="1" fill="#000"/><rect x="0" y="444" width="7" height="1" fill="#000"/><rect x="0" y="445" width="6" height="1" fill="#000"/><rect x="0" y="446" width="14" height="1" fill="#000"/><rect x="0" y="447" width="14" height="1" fill="#000"/><rect x="0" y="448" width="13" height="1" fill="#000"/><rect x="0" y="449" width="14" height="1" fill="#000"/><rect x="0" y="450" width="13" height="1" fill="#000"/><rect x="0" y="451" width="4" height="1" fill="#000"/><rect x="0" y="452" width="17" height="1" fill="#0e0e48"/><rect x="0" y="453" width="16" height="1" fill="#0e0e48"/><rect x="0" y="454" width="13" height="1" fill="#000"/><rect x="0" y="455" width="11" height="1" fill="#000"/><rect x="0" y="456" width="9" height="1" fill="#000"/><rect x="0" y="457" width="8" height="1" fill="#000"/><rect x="0" y="458" width="9" height="1" fill="#000"/><rect x="0" y="459" width="14" height="1" fill="#000"/><rect x="0" y="460" width="16" height="1" fill="#000"/><rect x="0" y="461" width="12" height="1" fill="#000"/><rect x="0" y="462" width="11" height="1" fill="#000"/><rect x="0" y="463" width="5" height="1" fill="#000"/><rect x="0" y="464" width="16" height="1" fill="#0e0e48"/><rect x="0" y="465" width="16" height="1" fill="#0e0e48"/><rect x="0" y="466" width="14" height="1" fill="#000"/><rect x="0" y="467" width="12" height="1" fill="#000"/><rect x="0" y="468" width="11" height="1" fill="#000"/><rect x="0" y="469" width="5" height="1" fill="#000"/><rect x="0" y="470" width="4" height="1" fill="#000"/><rect x="0" y="471" width="18" height="1" fill="#0e0e48"/><rect x="0" y="472" width="18" height="1" fill="#0e0e48"/><rect x="0" y="473" width="2" height="1" fill="#000"/><rect x="0" y="474" width="2" height="1" fill="#000"/><rect x="0" y="475" width="3" height="1" fill="#000"/><rect x="0" y="476" width="2" height="1" fill="#000"/><rect x="0" y="477" width="3" height="1" fill="#000"/><rect x="0" y="478" width="2" height="1" fill="#000"/><rect x="0" y="479" width="2" height="1" fill="#000"/><rect x="0" y="480" width="2" height="1" fill="#000"/><rect x="0" y="481" width="11" height="1" fill="#000"/><rect x="0" y="482" width="16" height="1" fill="#000"/><rect x="0" y="483" width="11" height="1" fill="#000"/><rect x="0" y="484" width="11" height="1" fill="#000"/><rect x="0" y="485" width="3" height="1" fill="#000"/><rect x="0" y="486" width="16" height="1" fill="#000"/><rect x="0" y="487" width="12" height="1" fill="#000"/><rect x="0" y="488" width="18" height="1" fill="#000"/><rect x="0" y="489" width="16" height="1" fill="#000"/><rect x="0" y="490" width="11" height="1" fill="#000"/><rect x="0" y="491" width="2" height="1" fill="#000"/><rect x="0" y="492" width="7" height="1" fill="#000"/><rect x="0" y="493" width="5" height="1" fill="#000"/><rect x="0" y="494" width="14" height="1" fill="#000"/><rect x="0" y="495" width="15" height="1" fill="#000"/><rect x="0" y="496" width="16" height="1" fill="#000"/><rect x="0" y="497" width="9" height="1" fill="#000"/><rect x="0" y="498" width="8" height="1" fill="#000"/><rect x="0" y="499" width="5" height="1" fill="#000"/><rect x="0" y="500" width="2" height="1" fill="#000"/><rect x="0" y="501" width="3" height="1" fill="#000"/><rect x="0" y="502" width="2" height="1" fill="#000"/><rect x="0" y="503" width="2" height="1" fill="#000"/><rect x="0" y="504" width="2" height="1" fill="#000"/><rect x="0" y="505" width="4" height="1" fill="#000"/><rect x="0" y="506" width="11" height="1" fill="#000"/><rect x="0" y="507" width="13" height="1" fill="#000"/><rect x="0" y="508" width="10" height="1" fill="#000"/><rect x="0" y="509" width="14" height="1" fill="#000"/><rect x="0" y="510" width="9" height="1" fill="#000"/><rect x="0" y="511" width="7" height="1" fill="#000"/><rect x="0" y="512" width="2" height="1" fill="#000"/><rect x="0" y="513" width="2" height="1" fill="#000"/><rect x="0" y="514" width="2" height="1" fill="#000"/><rect x="0" y="515" width="3" height="1" fill="#000"/><rect x="0" y="516" width="3" height="1" fill="#000"/><rect x="0" y="517" width="15" height="1" fill="#000"/><rect x="0" y="518" width="17" height="1" fill="#000"/><rect x="0" y="519" width="9" height="1" fill="#000"/><rect x="0" y="520" width="15" height="1" fill="#000"/><rect x="0" y="521" width="17" height="1" fill="#0e0e48"/><rect x="0" y="522" width="18" height="1" fill="#0e0e48"/><rect x="0" y="523" width="23" height="1" fill="#0e0e48"/><rect x="0" y="524" width="7" height="1" fill="#000"/><rect x="0" y="525" width="2" height="1" fill="#000"/><rect x="0" y="526" width="2" height="1" fill="#000"/><rect x="0" y="527" width="2" height="1" fill="#000"/><rect x="0" y="528" width="9" height="1" fill="#000"/><rect x="0" y="529" width="10" height="1" fill="#000"/><rect x="0" y="530" width="5" height="1" fill="#000"/><rect x="0" y="531" width="10" height="1" fill="#000"/><rect x="0" y="532" width="16" height="1" fill="#0e0e48"/><rect x="0" y="533" width="23" height="1" fill="#0e0e48"/><rect x="0" y="534" width="20" height="1" fill="#0e0e48"/><rect x="0" y="535" width="3" height="1" fill="#000"/><rect x="0" y="536" width="5" height="1" fill="#000"/><rect x="0" y="537" width="2" height="1" fill="#000"/><rect x="0" y="538" width="3" height="1" fill="#000"/><rect x="0" y="539" width="9" height="1" fill="#000"/><rect x="0" y="540" width="9" height="1" fill="#000"/><rect x="0" y="541" width="6" height="1" fill="#000"/><rect x="0" y="542" width="6" height="1" fill="#000"/><rect x="0" y="543" width="8" height="1" fill="#000"/><rect x="0" y="544" width="8" height="1" fill="#000"/><rect x="0" y="545" width="7" height="1" fill="#000"/><rect x="0" y="546" width="16" height="1" fill="#000"/><rect x="0" y="547" width="14" height="1" fill="#000"/><rect x="0" y="548" width="16" height="1" fill="#000"/><rect x="0" y="549" width="15" height="1" fill="#000"/><rect x="0" y="550" width="15" height="1" fill="#000"/><rect x="0" y="551" width="7" height="1" fill="#000"/><rect x="0" y="552" width="8" height="1" fill="#000"/><rect x="0" y="553" width="10" height="1" fill="#000"/><rect x="0" y="554" width="8" height="1" fill="#000"/><rect x="0" y="555" width="11" height="1" fill="#000"/><rect x="0" y="556" width="17" height="1" fill="#0e0e48"/><rect x="0" y="557" width="23" height="1" fill="#0e0e48"/><rect x="0" y="558" width="4" height="1" fill="#000"/><rect x="0" y="559" width="3" height="1" fill="#000"/><rect x="0" y="560" width="2" height="1" fill="#000"/><rect x="0" y="561" width="4" height="1" fill="#000"/><rect x="0" y="562" width="2" height="1" fill="#000"/><rect x="0" y="563" width="2" height="1" fill="#000"/><rect x="0" y="564" width="7" height="1" fill="#000"/><rect x="0" y="565" width="5" height="1" fill="#000"/><rect x="0" y="566" width="8" height="1" fill="#000"/><rect x="0" y="567" width="7" height="1" fill="#000"/><rect x="0" y="568" width="2" height="1" fill="#000"/><rect x="0" y="569" width="8" height="1" fill="#000"/><rect x="0" y="570" width="15" height="1" fill="#000"/><rect x="0" y="571" width="6" height="1" fill="#000"/><rect x="0" y="572" width="5" height="1" fill="#000"/><rect x="0" y="573" width="5" height="1" fill="#000"/><rect x="0" y="574" width="2" height="1" fill="#000"/><rect x="0" y="575" width="6" height="1" fill="#000"/><rect x="0" y="576" width="2" height="1" fill="#000"/><rect x="0" y="577" width="3" height="1" fill="#000"/><rect x="0" y="578" width="8" height="1" fill="#000"/><rect x="0" y="579" width="5" height="1" fill="#000"/><rect x="0" y="580" width="2" height="1" fill="#000"/><rect x="0" y="581" width="2" height="1" fill="#000"/><rect x="0" y="582" width="2" height="1" fill="#000"/><rect x="0" y="583" width="10" height="1" fill="#000"/><rect x="0" y="584" width="8" height="1" fill="#000"/><rect x="0" y="585" width="8" height="1" fill="#000"/><rect x="0" y="586" width="11" height="1" fill="#000"/><rect x="0" y="587" width="9" height="1" fill="#000"/><rect x="0" y="588" width="16" height="1" fill="#0e0e48"/><rect x="0" y="589" width="22" height="1" fill="#0e0e48"/><rect x="0" y="590" width="12" height="1" fill="#000"/><rect x="0" y="591" width="10" height="1" fill="#000"/><rect x="0" y="592" width="9" height="1" fill="#000"/><rect x="0" y="593" width="6" height="1" fill="#000"/><rect x="0" y="594" width="5" height="1" fill="#000"/><rect x="0" y="595" width="6" height="1" fill="#000"/><rect x="0" y="596" width="6" height="1" fill="#000"/><rect x="0" y="597" width="11" height="1" fill="#000"/><rect x="0" y="598" width="16" height="1" fill="#000"/><rect x="0" y="599" width="3" height="1" fill="#000"/><rect x="0" y="600" width="11" height="1" fill="#000"/><rect x="0" y="601" width="4" height="1" fill="#000"/><rect x="0" y="602" width="8" height="1" fill="#000"/><rect x="0" y="603" width="4" height="1" fill="#000"/><rect x="0" y="604" width="15" height="1" fill="#000"/><rect x="0" y="605" width="10" height="1" fill="#000"/><rect x="0" y="606" width="12" height="1" fill="#000"/><rect x="0" y="607" width="8" height="1" fill="#000"/><rect x="0" y="608" width="9" height="1" fill="#000"/><rect x="0" y="609" width="20" height="1" fill="#0e0e48"/><rect x="0" y="610" width="23" height="1" fill="#0e0e48"/><rect x="0" y="611" width="24" height="1" fill="#0e0e48"/><rect x="0" y="612" width="13" height="1" fill="#000"/><rect x="0" y="613" width="12" height="1" fill="#000"/><rect x="0" y="614" width="9" height="1" fill="#000"/><rect x="0" y="615" width="11" height="1" fill="#000"/><rect x="0" y="616" width="16" height="1" fill="#000"/><rect x="0" y="617" width="19" height="1" fill="#000"/><rect x="0" y="618" width="19" height="1" fill="#000"/><rect x="0" y="619" width="22" height="1" fill="#000"/><rect x="0" y="620" width="15" height="1" fill="#000"/><rect x="0" y="621" width="10" height="1" fill="#000"/><rect x="0" y="622" width="6" height="1" fill="#000"/><rect x="0" y="623" width="7" height="1" fill="#000"/><rect x="0" y="624" width="4" height="1" fill="#000"/><rect x="0" y="625" width="19" height="1" fill="#000"/><rect x="0" y="626" width="10" height="1" fill="#000"/><rect x="0" y="627" width="11" height="1" fill="#000"/><rect x="0" y="628" width="8" height="1" fill="#000"/><rect x="0" y="629" width="2" height="1" fill="#000"/><rect x="0" y="630" width="15" height="1" fill="#000"/><rect x="0" y="631" width="11" height="1" fill="#000"/><rect x="0" y="632" width="12" height="1" fill="#000"/><rect x="0" y="633" width="13" height="1" fill="#000"/><rect x="0" y="634" width="22" height="1" fill="#000"/><rect x="0" y="635" width="9" height="1" fill="#000"/><rect x="0" y="636" width="12" height="1" fill="#000"/><rect x="0" y="637" width="11" height="1" fill="#000"/><rect x="0" y="638" width="14" height="1" fill="#000"/><rect x="0" y="639" width="12" height="1" fill="#000"/><rect x="0" y="640" width="8" height="1" fill="#000"/><rect x="0" y="641" width="13" height="1" fill="#000"/><rect x="0" y="642" width="20" height="1" fill="#0e0e48"/><rect x="0" y="643" width="21" height="1" fill="#0e0e48"/><rect x="0" y="644" width="9" height="1" fill="#000"/><rect x="0" y="645" width="12" height="1" fill="#000"/><rect x="0" y="646" width="6" height="1" fill="#000"/><rect x="0" y="647" width="5" height="1" fill="#000"/><rect x="0" y="648" width="15" height="1" fill="#000"/><rect x="0" y="649" width="13" height="1" fill="#000"/><rect x="0" y="650" width="8" height="1" fill="#000"/><rect x="0" y="651" width="12" height="1" fill="#000"/><rect x="0" y="652" width="17" height="1" fill="#000"/><rect x="0" y="653" width="7" height="1" fill="#000"/><rect x="0" y="654" width="3" height="1" fill="#000"/><rect x="0" y="655" width="5" height="1" fill="#000"/><rect x="0" y="656" width="3" height="1" fill="#000"/><rect x="0" y="657" width="2" height="1" fill="#000"/><rect x="0" y="658" width="12" height="1" fill="#000"/><rect x="0" y="659" width="9" height="1" fill="#000"/><rect x="0" y="660" width="2" height="1" fill="#000"/><rect x="0" y="661" width="9" height="1" fill="#000"/><rect x="0" y="662" width="10" height="1" fill="#000"/><rect x="0" y="663" width="14" height="1" fill="#000"/><rect x="0" y="664" width="20" height="1" fill="#000"/><rect x="0" y="665" width="14" height="1" fill="#000"/><rect x="0" y="666" width="22" height="1" fill="#0e0e48"/><rect x="0" y="667" width="24" height="1" fill="#0e0e48"/><rect x="0" y="668" width="14" height="1" fill="#000"/><rect x="0" y="669" width="16" height="1" fill="#0e0e48"/><rect x="0" y="670" width="9" height="1" fill="#000"/><rect x="0" y="671" width="13" height="1" fill="#000"/><rect x="0" y="672" width="11" height="1" fill="#000"/><rect x="0" y="673" width="18" height="1" fill="#0e0e48"/><rect x="0" y="674" width="20" height="1" fill="#0e0e48"/><rect x="0" y="675" width="21" height="1" fill="#0e0e48"/><rect x="0" y="676" width="13" height="1" fill="#000"/><rect x="0" y="677" width="8" height="1" fill="#000"/><rect x="0" y="678" width="6" height="1" fill="#000"/><rect x="0" y="679" width="11" height="1" fill="#000"/><rect x="0" y="680" width="15" height="1" fill="#000"/><rect x="0" y="681" width="7" height="1" fill="#000"/><rect x="0" y="682" width="15" height="1" fill="#000"/><rect x="0" y="683" width="4" height="1" fill="#000"/><rect x="0" y="684" width="8" height="1" fill="#000"/><rect x="0" y="685" width="14" height="1" fill="#000"/><rect x="0" y="686" width="19" height="1" fill="#000"/><rect x="0" y="687" width="13" height="1" fill="#000"/><rect x="0" y="688" width="10" height="1" fill="#000"/><rect x="0" y="689" width="12" height="1" fill="#000"/><rect x="0" y="690" width="13" height="1" fill="#000"/><rect x="0" y="691" width="8" height="1" fill="#000"/><rect x="0" y="692" width="9" height="1" fill="#000"/><rect x="0" y="693" width="9" height="1" fill="#000"/><rect x="0" y="694" width="12" height="1" fill="#000"/><rect x="0" y="695" width="6" height="1" fill="#000"/><rect x="0" y="696" width="13" height="1" fill="#000"/><rect x="0" y="697" width="5" height="1" fill="#000"/><rect x="0" y="698" width="9" height="1" fill="#000"/><rect x="0" y="699" width="8" height="1" fill="#000"/><rect x="0" y="700" width="7" height="1" fill="#000"/><rect x="0" y="701" width="13" height="1" fill="#000"/><rect x="0" y="702" width="14" height="1" fill="#000"/><rect x="0" y="703" width="25" height="1" fill="#0e0e48"/><rect x="0" y="704" width="7" height="1" fill="#000"/><rect x="0" y="705" width="4" height="1" fill="#000"/><rect x="0" y="706" width="6" height="1" fill="#000"/><rect x="0" y="707" width="5" height="1" fill="#000"/><rect x="0" y="708" width="6" height="1" fill="#000"/><rect x="0" y="709" width="6" height="1" fill="#000"/><rect x="0" y="710" width="12" height="1" fill="#000"/><rect x="0" y="711" width="16" height="1" fill="#000"/><rect x="0" y="712" width="21" height="1" fill="#0e0e48"/><rect x="0" y="713" width="10" height="1" fill="#000"/><rect x="0" y="714" width="8" height="1" fill="#000"/><rect x="0" y="715" width="13" height="1" fill="#000"/><rect x="0" y="716" width="7" height="1" fill="#000"/><rect x="0" y="717" width="13" height="1" fill="#000"/><rect x="0" y="718" width="8" height="1" fill="#000"/><rect x="0" y="719" width="2" height="1" fill="#000"/><rect x="0" y="720" width="7" height="1" fill="#000"/><rect x="0" y="721" width="10" height="1" fill="#000"/><rect x="0" y="722" width="8" height="1" fill="#000"/><rect x="0" y="723" width="5" height="1" fill="#000"/><rect x="0" y="724" width="17" height="1" fill="#000"/><rect x="0" y="725" width="6" height="1" fill="#000"/><rect x="0" y="726" width="9" height="1" fill="#000"/><rect x="0" y="727" width="5" height="1" fill="#000"/><rect x="0" y="728" width="7" height="1" fill="#000"/><rect x="0" y="729" width="9" height="1" fill="#000"/><rect x="0" y="730" width="9" height="1" fill="#000"/><rect x="0" y="731" width="12" height="1" fill="#000"/><rect x="0" y="732" width="6" height="1" fill="#000"/><rect x="0" y="733" width="5" height="1" fill="#000"/><rect x="0" y="734" width="2" height="1" fill="#000"/><rect x="0" y="735" width="2" height="1" fill="#000"/><rect x="0" y="736" width="6" height="1" fill="#000"/><rect x="0" y="737" width="5" height="1" fill="#000"/><rect x="0" y="738" width="8" height="1" fill="#000"/><rect x="0" y="739" width="10" height="1" fill="#000"/><rect x="0" y="740" width="11" height="1" fill="#000"/><rect x="0" y="741" width="8" height="1" fill="#000"/><rect x="0" y="742" width="9" height="1" fill="#000"/><rect x="0" y="743" width="7" height="1" fill="#000"/><rect x="0" y="744" width="14" height="1" fill="#000"/><rect x="0" y="745" width="8" height="1" fill="#000"/><rect x="0" y="746" width="2" height="1" fill="#000"/><rect x="0" y="747" width="7" height="1" fill="#000"/><rect x="0" y="748" width="16" height="1" fill="#000"/><rect x="0" y="749" width="9" height="1" fill="#000"/><rect x="0" y="750" width="13" height="1" fill="#000"/><rect x="0" y="751" width="6" height="1" fill="#000"/><rect x="0" y="752" width="7" height="1" fill="#000"/><rect x="0" y="753" width="5" height="1" fill="#000"/><rect x="0" y="754" width="5" height="1" fill="#000"/><rect x="0" y="755" width="3" height="1" fill="#000"/><rect x="0" y="756" width="3" height="1" fill="#000"/><rect x="0" y="757" width="7" height="1" fill="#000"/><rect x="0" y="758" width="2" height="1" fill="#000"/><rect x="0" y="759" width="8" height="1" fill="#000"/><rect x="0" y="760" width="7" height="1" fill="#000"/><rect x="0" y="761" width="4" height="1" fill="#000"/><rect x="0" y="762" width="2" height="1" fill="#000"/><rect x="0" y="763" width="13" height="1" fill="#000"/><rect x="0" y="764" width="2" height="1" fill="#000"/><rect x="0" y="765" width="4" height="1" fill="#000"/><rect x="0" y="766" width="6" height="1" fill="#000"/><rect x="0" y="767" width="9" height="1" fill="#000"/><rect x="0" y="768" width="13" height="1" fill="#000"/><rect x="0" y="769" width="4" height="1" fill="#000"/><rect x="0" y="770" width="10" height="1" fill="#000"/><rect x="0" y="771" width="6" height="1" fill="#000"/><rect x="0" y="772" width="13" height="1" fill="#000"/><rect x="0" y="773" width="8" height="1" fill="#000"/><rect x="0" y="774" width="8" height="1" fill="#000"/><rect x="0" y="775" width="7" height="1" fill="#000"/><rect x="0" y="776" width="11" height="1" fill="#000"/><rect x="0" y="18" width="80" height="1" fill="#808080"/><rect x="0" y="96" width="80" height="1" fill="#808080"/><rect x="0" y="174" width="80" height="1" fill="#808080"/><rect x="0" y="252" width="80" height="1" fill="#808080"/><rect x="0" y="330" width="80" height="1" fill="#808080"/><rect x="0" y="408" width="80" height="1" fill="#808080"/><rect x="0" y="486" width="80" height="1" fill="#808080"/><rect x="0" y="564" width="80" height="1" fill="#808080"/><rect x="0" y="642" width="80" height="1" fill="#808080"/><rect x="0" y="720" width="80" height="1" fill="#808080"/><polyline points="0.5,1.0 1.0,17.0 9.4,24.0 9.0,28.0 10.1,33.0 10.9,37.0 10.0,41.0 11.3,46.0 10.3,49.0 10.1,52.0 11.0,55.0 9.9,58.0 11.4,61.0 10.1,66.0 11.0,70.0 10.4,75.0 9.8,80.0 11.5,85.0 9.9,90.0 11.6,93.0 10.0,98.0 11.1,101.0 10.3,106.0 11.5,110.0 10.2,115.0 11.1,119.0 9.9,124.0 10.2,127.0 11.5,132.0 11.3,136.0 10.1,139.0 10.1,143.0 11.4,148.0 10.3,153.0 12.0,155.6 16.3,159.8 23.0,163.3 43.0,164.7 47.0,166.9 59.0,168.3 44.3,171.0 29.0,174.6 17.7,175.3 16.3,178.0 23.3,184.4 13.4,190.7 19.0,195.0 12.0,202.0 10.0,209.0 11.0,212.0 10.1,217.0 11.1,220.0 10.3,225.0 11.0,229.0 10.1,233.0 11.0,238.0 10.9,242.0 9.7,247.0 11.2,251.0 11.0,254.0 10.1,259.0 10.1,262.0 11.7,266.0 10.2,269.0 10.6,273.0 11.6,277.0 10.6,282.0 11.2,286.0 10.1,290.0 10.0,293.0 11.9,296.0 10.7,300.0 11.3,305.0 11.9,309.0 10.2,312.0 11.5,315.0 10.6,320.0 12.0,324.0 11.6,329.0 11.8,334.0 10.2,337.0 12.0,342.0 10.6,346.0 10.9,351.0 11.7,355.0 10.3,360.0 11.7,365.0 10.8,370.0 11.6,373.0 10.7,377.0 12.4,381.0 10.8,384.0 11.9,387.0 11.0,390.0 10.6,393.0 12.0,397.0 11.0,400.0 12.1,403.0 11.2,407.0 12.3,412.0 11.9,415.0 10.8,419.0 12.4,423.0 11.8,426.0 10.6,430.0 12.1,433.0 12.4,438.0 12.4,441.0 10.9,444.0 12.3,449.0 11.8,453.0 10.8,456.0 12.3,459.0 10.9,462.0 12.4,466.0 11.2,469.0 11.1,472.0 11.8,477.0 11.2,481.0 12.2,484.0 11.4,487.0 12.1,492.0 10.7,496.0 12.0,499.0 11.3,503.0 12.4,507.0 11.3,511.0 12.5,516.0 10.7,520.0 12.1,523.0 11.4,527.0 12.0,532.0 10.8,536.0 12.0,541.0 11.5,544.0 11.9,548.0 11.2,552.0 12.5,556.0 12.2,559.0 10.9,564.0 12.5,569.0 12.3,573.0 11.3,576.0 12.4,579.0 11.3,583.0 11.5,587.0 12.3,590.0 12.2,593.0 11.5,597.0 12.6,602.0 11.2,605.0 11.4,608.0 12.3,613.0 11.6,618.0 12.3,623.0 11.0,626.0 12.8,631.0 11.5,634.0 12.8,638.0 10.9,642.0 10.9,645.0 12.3,650.0 11.2,653.0 12.4,657.0 11.6,662.0 12.3,665.0 11.3,668.0 12.9,671.0 12.3,674.0 11.3,677.0 11.6,681.0 12.6,685.0 11.3,690.0 12.7,693.0 11.3,697.0 12.3,702.0 11.5,705.0 12.3,710.0 10.9,714.0 12.7,717.0 11.0,721.0 12.9,725.0 11.0,729.0 12.3,733.0 11.0,738.0 12.5,741.0 12.7,745.0 11.0,750.0 12.8,755.0 11.5,758.0 12.0,760.0 0.8,781.0" stroke="#c83838" stroke-width="1.4" fill="none" opacity="0.85"/><polyline points="1.0,8.0 4.0,9.0 1.0,11.5 2.0,11.5 17.0,20.0 19.8,21.0 18.3,23.0 22.6,24.0 24.8,27.0 23.3,30.0 24.2,31.0 24.8,32.0 23.3,33.0 29.0,34.0 24.7,35.0 29.8,38.0 30.2,41.0 26.4,44.0 28.5,45.0 25.8,46.0 29.6,48.0 26.2,50.0 28.0,53.0 25.6,55.0 29.3,58.0 26.1,61.0 25.4,63.0 30.5,66.0 26.3,67.0 29.0,69.0 26.9,70.0 29.7,71.0 27.5,72.0 31.3,75.0 30.7,78.0 28.6,80.0 30.5,81.0 27.8,83.0 31.1,84.0 28.2,85.0 32.8,88.0 32.2,90.0 30.8,92.0 33.7,94.0 31.3,96.0 35.3,98.0 32.6,100.0 34.9,101.0 33.1,102.0 35.6,104.0 32.8,107.0 37.4,110.0 34.6,111.0 37.3,112.0 38.0,115.0 37.7,117.0 40.0,120.0 40.5,123.0 42.3,125.0 42.3,127.0 44.2,129.0 43.6,131.0 45.6,133.0 45.4,135.0 47.1,137.0 47.2,139.0 48.7,141.0 49.8,143.0 49.7,145.0 52.9,147.0 54.5,150.0 58.0,152.0 60.7,155.0 68.0,158.0 72.9,161.0 77.9,163.0 81.0,164.7" stroke="#30e030" stroke-width="1" fill="none" shape-rendering="crispEdges"/><polyline points="81.0,172.5 64.7,174.6 53.5,185.8 55.6,187.2 65.4,190.7 81.0,195.0" stroke="#30e030" stroke-width="1" fill="none" shape-rendering="crispEdges"/><polyline points="81.0,195.0 64.0,202.0 52.8,206.9 40.0,212.5 37.3,216.0 39.4,221.6 40.8,223.0 33.8,225.0 35.6,227.0 29.3,228.0 35.2,231.0 29.9,232.0 36.1,234.0 29.1,236.0 34.3,238.0 33.9,241.0 29.1,243.0 33.7,245.0 28.0,249.0 30.5,253.0 31.4,257.0 24.9,258.0 31.5,260.0 29.8,262.0 24.9,264.0 30.2,265.0 24.9,267.0 29.6,268.0 25.2,270.0 24.7,273.0 30.3,276.0 29.6,279.0 26.2,282.0 29.2,283.0 28.0,287.0 25.7,289.0 24.1,292.0 25.4,293.0 30.0,296.0 24.8,298.0 27.9,300.0 29.9,304.0 28.8,306.0 29.6,310.0 24.5,312.0 27.5,314.0 23.2,318.0 29.3,320.0 29.2,324.0 23.6,326.0 28.2,330.0 24.6,332.0 30.0,335.0 29.9,336.0 23.5,338.0 28.9,339.0 22.9,343.0 27.3,346.0 25.6,348.0 25.2,350.0 28.7,354.0 29.4,356.0 23.7,358.0 27.2,362.0 23.6,365.0 24.1,368.0 23.5,370.0 29.6,372.0 23.1,373.0 27.7,375.0 27.6,376.0 23.5,378.0 24.6,382.0 30.0,384.0 22.8,386.0 28.0,390.0 23.4,391.0 28.2,393.0 27.4,395.0 28.4,399.0 29.4,401.0 24.6,403.0 29.6,407.0 24.6,408.0 28.6,411.0 24.7,412.0 28.6,413.0 24.4,415.0 22.5,417.0 25.1,421.0 29.5,424.0 24.9,426.0 29.3,427.0 24.2,429.0 28.0,431.0 23.8,433.0 27.3,435.0 22.6,436.0 29.5,437.0 24.1,441.0 29.3,443.0 24.9,445.0 28.4,447.0 29.1,448.0 29.6,451.0 23.5,454.0 29.2,455.0 24.5,459.0 27.8,461.0 22.4,465.0 25.3,467.0 29.4,468.0 23.9,469.0 27.7,472.0 23.5,475.0 26.9,476.0 28.3,477.0 22.4,479.0 27.5,481.0 24.4,483.0 23.6,487.0 26.9,489.0 24.1,492.0 23.1,494.0 28.0,497.0 27.4,500.0 29.2,501.0 28.8,503.0 23.5,506.0 28.1,510.0 24.9,512.0 27.0,514.0 28.1,515.0 22.9,517.0 29.0,519.0 28.9,523.0 24.0,525.0 24.4,529.0 28.5,531.0 24.3,533.0 28.9,535.0 22.8,536.0 27.8,537.0 29.1,539.0 22.5,540.0 29.5,543.0 28.4,544.0 24.6,547.0 29.6,548.0 22.4,550.0 22.9,553.0 29.2,555.0 27.2,557.0 23.6,561.0 28.2,562.0 23.6,566.0 27.8,568.0 23.8,571.0 26.8,573.0 24.1,575.0 29.4,579.0 28.1,582.0 22.9,585.0 29.4,586.0 23.1,588.0 28.6,591.0 23.4,594.0 29.2,596.0 28.0,597.0 23.3,599.0 27.5,600.0 29.2,602.0 24.0,603.0 22.9,605.0 28.7,609.0 26.9,611.0 22.9,614.0 27.3,615.0 28.6,617.0 22.8,621.0 25.0,622.0 28.3,623.0 22.8,627.0 28.8,628.0 24.0,631.0 26.8,633.0 27.4,636.0 23.2,638.0 22.3,642.0 28.8,644.0 22.7,646.0 25.0,647.0 29.1,649.0 23.5,653.0 26.8,655.0 23.2,656.0 28.3,658.0 22.4,661.0 29.5,663.0 22.5,664.0 23.2,665.0 29.2,668.0 22.4,672.0 27.5,674.0 25.2,676.0 28.1,678.0 29.1,681.0 27.6,683.0 23.6,686.0 29.5,690.0 26.8,692.0 22.5,694.0 27.3,698.0 23.9,700.0 28.4,701.0 27.4,703.0 24.5,707.0 23.1,711.0 23.3,712.0 28.9,713.0 22.2,714.0 28.6,717.0 23.0,719.0 29.7,721.0 23.3,723.0 27.2,727.0 23.1,728.0 29.0,729.0 24.1,730.0 29.0,731.0 23.1,735.0 27.3,738.0 24.0,740.0 28.1,742.0 22.6,743.0 29.3,745.0 24.9,747.0 28.8,749.0 22.7,750.0 27.2,751.0 24.3,755.0 27.2,756.0 24.1,757.0 28.5,761.0 25.2,763.0 19.3,771.5 12.0,775.5 13.0,778.0 8.9,781.5" stroke="#30e030" stroke-width="1" fill="none" shape-rendering="crispEdges"/><path d="M76,781.7 Q77,778 80,778" stroke="#30e030" stroke-width="1" fill="none"/><circle cx="68.5" cy="97.5" r="3.3" fill="#000" stroke="#b02020" stroke-width="1.2"/></svg></body></html>
